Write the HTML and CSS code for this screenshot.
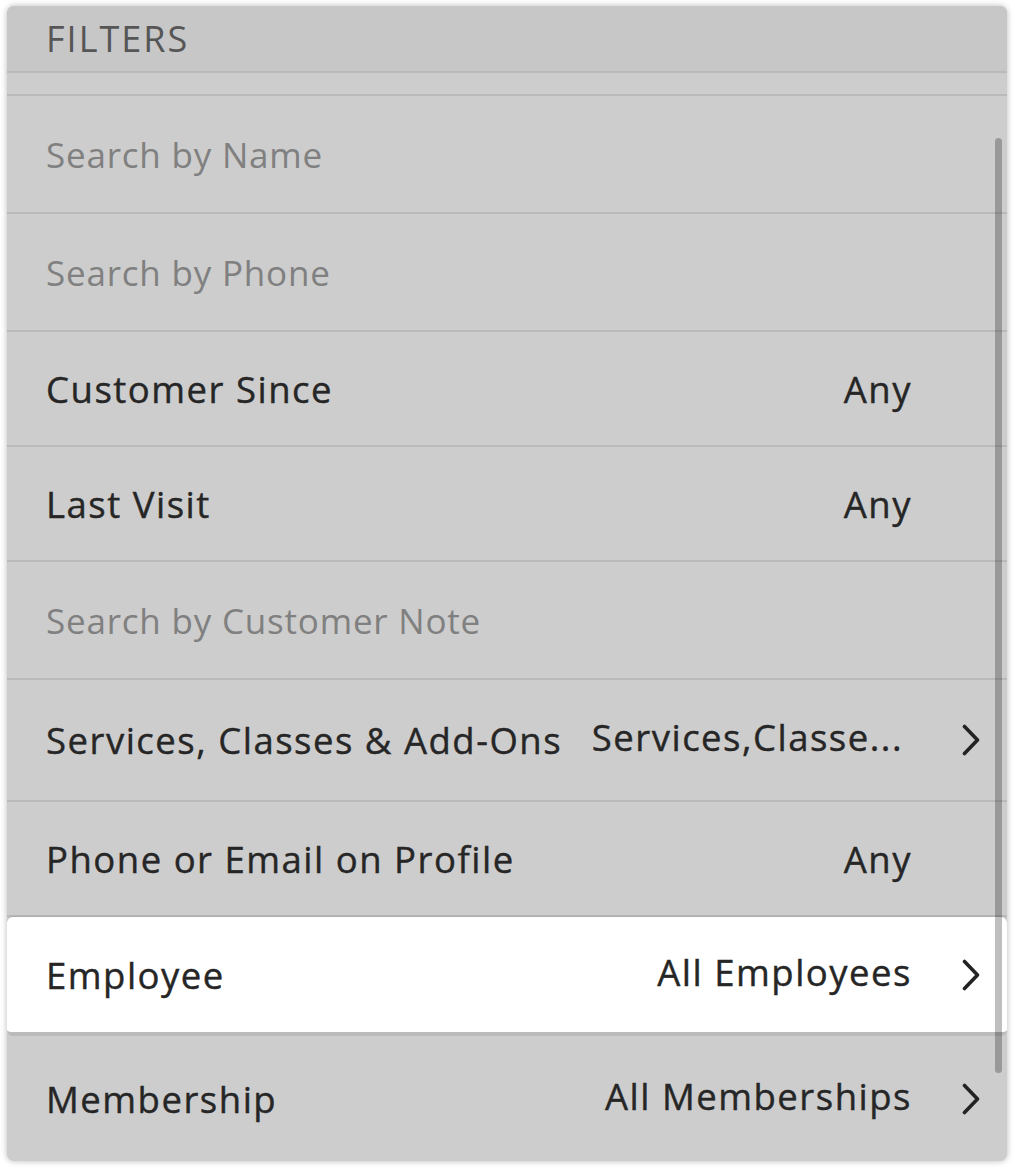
FILE: index.html
```html
<!DOCTYPE html>
<html lang="en">
<head>
<meta charset="utf-8">
<title>Filters</title>
<link rel="stylesheet" href="styles.css">
</head>
<body>
<div class="panel">
  <div class="panel-header">FILTERS</div>
  <div class="spacer"></div>
  <div class="row row-input"><span class="placeholder">Search by Name</span></div>
  <div class="row row-input"><span class="placeholder">Search by Phone</span></div>
  <div class="row row-select"><span class="label">Customer Since</span><span class="value">Any</span><span class="chev-slot"></span></div>
  <div class="row row-select"><span class="label">Last Visit</span><span class="value">Any</span><span class="chev-slot"></span></div>
  <div class="row row-input"><span class="placeholder">Search by Customer Note</span></div>
  <div class="row row-nav"><span class="label">Services, Classes &amp; Add-Ons</span><span class="value value-raised value-trunc">Services,Classe...</span><span class="chev-slot"><svg class="chev" width="18" height="32" viewBox="0 0 18 32"><polyline points="2.5,2.5 15.5,16 2.5,29.5"/></svg></span></div>
  <div class="row row-select"><span class="label">Phone or Email on Profile</span><span class="value">Any</span><span class="chev-slot"></span></div>
  <div class="row row-nav row-active"><span class="label">Employee</span><span class="value value-raised">All Employees</span><span class="chev-slot"><svg class="chev" width="18" height="32" viewBox="0 0 18 32"><polyline points="2.5,2.5 15.5,16 2.5,29.5"/></svg></span></div>
  <div class="row row-last"><span class="label">Membership</span><span class="value value-raised">All Memberships</span><span class="chev-slot"><svg class="chev" width="18" height="32" viewBox="0 0 18 32"><polyline points="2.5,2.5 15.5,16 2.5,29.5"/></svg></span></div>
  <div class="scrollbar"></div>
</div>
</body>
</html>
```
FILE: styles.css
```css
html, body {
  margin: 0;
  padding: 0;
  background: #ffffff;
}

body {
  font-family: "Open Sans", "Liberation Sans", sans-serif;
  color: #2b2b2b;
}

.panel {
  position: relative;
  margin: 6px 8px 8px 7px;
  width: 1000px;
  background: #cdcdcd;
  border-radius: 7px;
  box-shadow: 0 0 6px rgba(0, 0, 0, 0.28);
  overflow: hidden;
}

.panel-header {
  height: 67px;
  box-sizing: border-box;
  padding: 11px 0 0 39px;
  background: #c7c7c7;
  border-bottom: 2px solid #bababa;
  color: #565656;
  font-size: 36px;
  line-height: 44px;
  letter-spacing: 2px;
}

.spacer {
  height: 21px;
  border-bottom: 2px solid #bababa;
}

.row {
  display: flex;
  align-items: center;
  padding-left: 39px;
  border-bottom: 2px solid #bababa;
  font-size: 35px;
  letter-spacing: 0.8px;
}

.row-input { height: 116px; }
.row-select { height: 113px; }
.row-nav { height: 120px; }

.row-active {
  height: 115px;
  background: #ffffff;
  border-radius: 6px;
  border-bottom: 4px solid #bbbbbb;
  box-shadow: 0 -1px 2px rgba(0, 0, 0, 0.08);
}

.row-last {
  height: 125px;
  border-bottom: none;
}

.placeholder {
  color: #808080;
}

.label,
.value {
  color: #262626;
  font-size: 36.5px;
  letter-spacing: 1.5px;
  -webkit-text-stroke: 0.4px #262626;
}

.label {
  flex: 1;
}

.value {
  text-align: right;
}

.value-raised {
  position: relative;
  top: -3px;
}

.value-trunc {
  margin-right: 9px;
}

.chev-slot {
  width: 95px;
  box-sizing: border-box;
  padding-left: 50px;
  display: flex;
  align-items: center;
}

.chev {
  display: block;
  fill: none;
  stroke: #232323;
  stroke-width: 3.6;
  stroke-linecap: round;
  stroke-linejoin: round;
}

.scrollbar {
  position: absolute;
  left: 988px;
  top: 132px;
  width: 7px;
  height: 935px;
  border-radius: 4px;
  background: rgba(0, 0, 0, 0.25);
}
```
